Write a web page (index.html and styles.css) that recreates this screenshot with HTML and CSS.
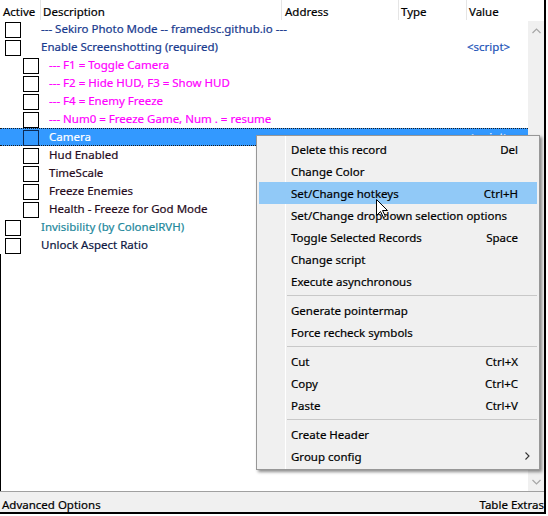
FILE: index.html
```html
<!DOCTYPE html>
<html>
<head>
<meta charset="utf-8">
<title>Cheat Table</title>
<link rel="stylesheet" href="styles.css">
</head>
<body>
<div class="window">
  <div class="header">
    <div class="hcol c-active">Active</div>
    <div class="hcol c-desc">Description</div>
    <div class="hcol c-addr">Address</div>
    <div class="hcol c-type">Type</div>
    <div class="hcol c-val">Value</div>
    <div class="hcol c-rest"></div>
  </div>
  <div class="main">
    <div class="list">
      <div class="row top"><div class="name"><span class="cb"></span><span class="txt navy">--- Sekiro Photo Mode -- framedsc.github.io ---</span></div><div class="val"></div></div>
      <div class="row top"><div class="name"><span class="cb"></span><span class="txt navy">Enable Screenshotting (required)</span></div><div class="val script">&lt;script&gt;</div></div>
      <div class="row child"><div class="name"><span class="cb"></span><span class="txt pink">--- F1 = Toggle Camera</span></div><div class="val"></div></div>
      <div class="row child"><div class="name"><span class="cb"></span><span class="txt pink">--- F2 = Hide HUD, F3 = Show HUD</span></div><div class="val"></div></div>
      <div class="row child"><div class="name"><span class="cb"></span><span class="txt pink">--- F4 = Enemy Freeze</span></div><div class="val"></div></div>
      <div class="row child"><div class="name"><span class="cb"></span><span class="txt pink">--- Num0 = Freeze Game, Num . = resume</span></div><div class="val"></div></div>
      <div class="row child selected"><div class="name"><span class="cb"></span><span class="txt">Camera</span></div><div class="val">&lt;script&gt;</div></div>
      <div class="row child"><div class="name"><span class="cb"></span><span class="txt dark">Hud Enabled</span></div><div class="val"></div></div>
      <div class="row child"><div class="name"><span class="cb"></span><span class="txt dark">TimeScale</span></div><div class="val"></div></div>
      <div class="row child"><div class="name"><span class="cb"></span><span class="txt dark">Freeze Enemies</span></div><div class="val"></div></div>
      <div class="row child"><div class="name"><span class="cb"></span><span class="txt dark">Health - Freeze for God Mode</span></div><div class="val"></div></div>
      <div class="row top"><div class="name"><span class="cb"></span><span class="txt teal">Invisibility (by ColonelRVH)</span></div><div class="val"></div></div>
      <div class="row top"><div class="name"><span class="cb"></span><span class="txt darknavy">Unlock Aspect Ratio</span></div><div class="val"></div></div>
      <div class="filler"></div>
    </div>
    <div class="vscroll">
      <svg class="chev" width="9" height="6" viewBox="0 0 9 6"><polyline points="0.5,5 4.5,1 8.5,5" fill="none" stroke="#a6a6a6" stroke-width="1.2"/></svg>
      <svg class="chev" width="9" height="6" viewBox="0 0 9 6"><polyline points="0.5,1 4.5,5 8.5,1" fill="none" stroke="#a6a6a6" stroke-width="1.2"/></svg>
    </div>
  </div>
  <div class="status"><span>Advanced Options</span><span>Table Extras</span></div>
</div>

<div class="menu">
  <div class="item"><span>Delete this record</span><span>Del</span></div>
  <div class="item"><span>Change Color</span><span></span></div>
  <div class="item hot"><span>Set/Change hotkeys</span><span>Ctrl+H</span></div>
  <div class="item"><span>Set/Change dropdown selection options</span><span></span></div>
  <div class="item"><span>Toggle Selected Records</span><span>Space</span></div>
  <div class="item"><span>Change script</span><span></span></div>
  <div class="item"><span>Execute asynchronous</span><span></span></div>
  <div class="sep"></div>
  <div class="item"><span>Generate pointermap</span><span></span></div>
  <div class="item"><span>Force recheck symbols</span><span></span></div>
  <div class="sep"></div>
  <div class="item"><span>Cut</span><span>Ctrl+X</span></div>
  <div class="item"><span>Copy</span><span>Ctrl+C</span></div>
  <div class="item"><span>Paste</span><span>Ctrl+V</span></div>
  <div class="sep"></div>
  <div class="item"><span>Create Header</span><span></span></div>
  <div class="item"><span>Group config</span><svg class="arrow" width="5" height="8" viewBox="0 0 5 8"><polyline points="0.5,0.5 4,4 0.5,7.5" fill="none" stroke="#333" stroke-width="1.1"/></svg></div>
</div>

<svg class="cursor" width="13" height="20" viewBox="0 0 13 20"><path d="M0.5,0.5 L0.5,16.5 L4.5,12.5 L7.5,18.5 L9.5,17.5 L6.5,11.5 L11.5,11.5 Z" fill="#fff" stroke="#000" stroke-width="1" stroke-linejoin="miter"/></svg>
</body>
</html>
```

FILE: styles.css
```css
* { box-sizing: border-box; }
html, body { margin: 0; padding: 0; }
body {
  width: 548px;
  height: 516px;
  background: #fff;
  font-family: "Noto Sans", "Open Sans", sans-serif;
  font-size: 11.5px;
  color: #000;
  position: relative;
  overflow: hidden;
  -webkit-text-stroke: 0.2px currentColor;
}

.window {
  width: 546px;
  height: 514px;
  border-right: 2px solid #000;
  border-bottom: 2px solid #000;
  display: flex;
  flex-direction: column;
  background: #fff;
}

/* header */
.header { height: 20px; display: flex; flex: none; }
.hcol {
  height: 20px;
  line-height: 23px;
  padding-left: 2px;
  border-left: 1px solid #e5e5e5;
  white-space: nowrap;
}
.c-active { width: 40px; border-left: none; padding-left: 3px; }
.c-desc { width: 241px; }
.c-addr { width: 117px; padding-left: 3px; }
.c-type { width: 68px; }
.c-val { width: 62px; }
.c-rest { flex: 1; border-left: none; }

/* main list */
.main { flex: 1; display: flex; min-height: 0; }
.list { flex: 1; display: flex; flex-direction: column; }
.row {
  flex: none;
  height: 18px;
  display: grid;
  grid-template-columns: 466px 1fr;
  line-height: 18px;
  white-space: nowrap;
}
.filler { flex: 1; border-left: 1px solid #000; }
.name { display: flex; align-items: flex-start; }
.cb {
  flex: none;
  width: 16px;
  height: 16px;
  margin-top: 2px;
  border: 1px solid #000;
}
.top .cb { margin-left: 5px; margin-right: 20px; }
.child .cb { margin-left: 23px; margin-right: 10px; }
.val { padding-left: 1px; }
.script { color: #2153b8; }

.navy { color: #183a8e; }
.pink { color: #ff00ff; }
.dark { color: #260b1c; }
.teal { color: #22889c; }
.darknavy { color: #0d1742; }

.selected {
  background: #3399ff;
  color: #fff;
  border-top: 1px dotted #1a1a1a;
  border-bottom: 1px dotted #1a1a1a;
  line-height: 16px;
}
.selected .cb { margin-top: 1px; border-color: #0c2a55; }

/* scrollbar */
.vscroll {
  width: 16px;
  margin-top: 1px;
  background: #f0f0f0;
  display: flex;
  flex-direction: column;
  justify-content: space-between;
  align-items: center;
  padding: 7px 0 6px;
}
.chev { display: block; }

/* status bar */
.status {
  flex: none;
  height: 21px;
  border-top: 1px solid #a0a0a0;
  background: #f0f0f0;
  display: flex;
  justify-content: space-between;
  padding: 6px 0 0 2px;
  line-height: 14px;
  white-space: nowrap;
}

/* context menu */
.menu {
  position: absolute;
  left: 256px;
  top: 135px;
  width: 284px;
  padding: 2px;
  border: 1px solid #979797;
  background:
    linear-gradient(to right, transparent 28px, #ffffff 28px, #ffffff 29px, transparent 29px),
    #f0f0f0;
  box-shadow: 2px 2px 3px rgba(0, 0, 0, 0.45);
}
.item {
  height: 22px;
  display: flex;
  justify-content: space-between;
  align-items: center;
  padding: 0 19px 0 32px;
  white-space: nowrap;
}
.item.hot { background: #91c9f7; }
.sep {
  height: 1px;
  margin: 3px 0 3px 28px;
  background: #c8c8c8;
}
.arrow { display: block; margin-right: -12px; }

.cursor {
  position: absolute;
  left: 376px;
  top: 199px;
  -webkit-text-stroke: 0;
}
```
